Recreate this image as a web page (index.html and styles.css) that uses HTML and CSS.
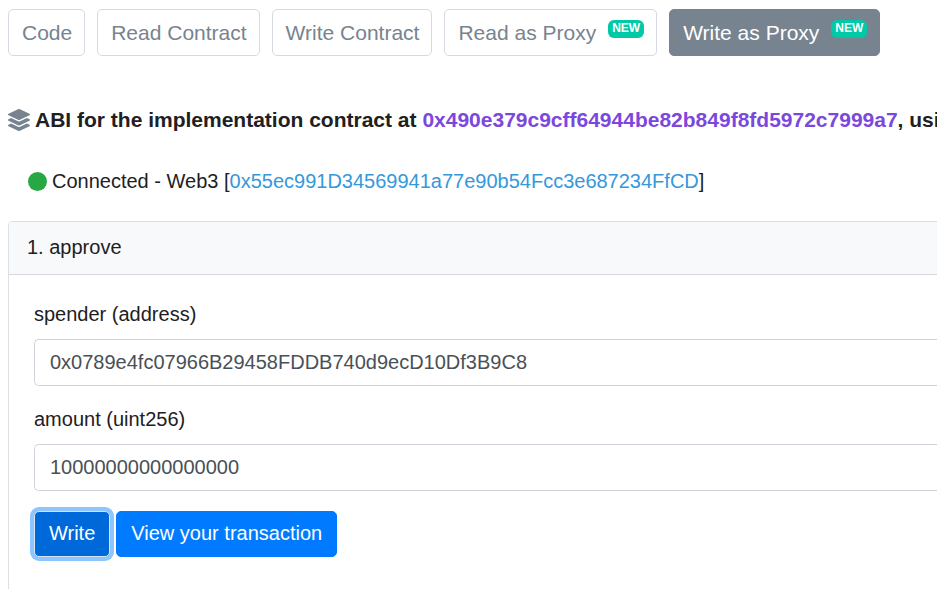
FILE: index.html
```html
<!DOCTYPE html>
<html lang="en">
<head>
<meta charset="utf-8">
<title>Write as Proxy</title>
<link rel="stylesheet" href="styles.css">
</head>
<body>
<nav class="tabs" aria-label="Contract views">
  <button class="tab" type="button">Code</button>
  <button class="tab" type="button">Read Contract</button>
  <button class="tab" type="button">Write Contract</button>
  <button class="tab" type="button">Read as Proxy <span class="badge">NEW</span></button>
  <button class="tab tab-active" type="button">Write as Proxy <span class="badge">NEW</span></button>
</nav>
<main>
  <p class="abi">
    <svg class="layers" viewBox="0 0 512 512" aria-hidden="true"><path d="M12.41 148.02l232.94 105.67c6.8 3.09 14.49 3.09 21.29 0l232.94-105.67c16.55-7.51 16.55-32.52 0-40.03L266.65 2.31a25.607 25.607 0 0 0-21.29 0L12.41 107.98c-16.55 7.51-16.55 32.53 0 40.04zm487.18 88.28l-58.09-26.33-161.64 73.27c-7.56 3.43-15.59 5.17-23.86 5.17s-16.29-1.74-23.86-5.17L70.51 209.97l-58.1 26.33c-16.55 7.5-16.55 32.5 0 40l232.94 105.59c6.8 3.08 14.49 3.08 21.29 0L499.59 276.3c16.55-7.5 16.55-32.5 0-40zm0 127.8l-57.87-26.23-161.86 73.37c-7.56 3.43-15.59 5.17-23.86 5.17s-16.29-1.74-23.86-5.17L70.29 337.87 12.41 364.1c-16.55 7.5-16.55 32.5 0 40l232.94 105.59c6.8 3.08 14.49 3.08 21.29 0L499.59 404.1c16.55-7.5 16.55-32.5 0-40z"/></svg>
    <span>ABI for the implementation contract at <a class="contract" href="#">0x490e379c9cff64944be82b849f8fd5972c7999a7</a>, using</span>
  </p>
  <p class="status"><span class="dot"></span><span>Connected - Web3 [<a href="#">0x55ec991D34569941a77e90b54Fcc3e687234FfCD</a>]</span></p>
  <section class="card">
    <h2 class="card-head">1. approve</h2>
    <form class="card-body">
      <label for="spender">spender (address)</label>
      <input id="spender" type="text" value="0x0789e4fc07966B29458FDDB740d9ecD10Df3B9C8">
      <label for="amount">amount (uint256)</label>
      <input id="amount" type="text" value="10000000000000000">
      <div class="actions">
        <button class="btn btn-focus" type="button">Write</button>
        <button class="btn" type="button">View your transaction</button>
      </div>
    </form>
  </section>
</main>
</body>
</html>
```
FILE: styles.css
```css
* { box-sizing: border-box; }
body {
  margin: 0;
  padding: 9px 0 0 8px;
  overflow: hidden;
  background: #fff;
  color: #1e2022;
  font: 20px/30px "Liberation Sans", Arial, sans-serif;
}
button, input { font: inherit; }
a { color: #3498db; text-decoration: none; }
.tabs { display: flex; gap: 12px; }
.tab {
  display: flex;
  align-items: center;
  gap: 12px;
  height: 47px;
  padding: 0 12px 0 13px;
  border: 1px solid #d5dae2;
  border-radius: 5px;
  background: #fff;
  color: #77838f;
  font-size: 21px;
  white-space: nowrap;
}
.tab-active { background: #77838f; border-color: #77838f; color: #fff; }
.badge {
  height: 18px;
  margin-bottom: 8px;
  padding: 0 4px;
  border-radius: 6px;
  background: #00c9a7;
  color: #fff;
  font-size: 12px;
  font-weight: bold;
  line-height: 16px;
}
.abi {
  display: flex;
  align-items: center;
  gap: 5px;
  margin: 49px 0 0;
  font-size: 21px;
  font-weight: bold;
  white-space: nowrap;
}
.layers { flex: none; width: 22px; height: 22px; fill: #77838f; }
.contract { color: #7c47dc; }
.status { display: flex; align-items: center; gap: 5px; margin: 31px 0 0 20px; }
.dot { width: 19px; height: 19px; border-radius: 50%; background: #28a745; }
.card {
  margin-top: 25px;
  border: 1px solid #dcdfe3;
  border-right: 0;
  border-bottom: 0;
  border-radius: 5px 0 0;
}
.card-head {
  margin: 0;
  padding: 10px 18px 12px;
  border-bottom: 1px solid #d5d8dc;
  border-radius: 4px 0 0;
  background: #f8f9fb;
  font-size: 20px;
  font-weight: normal;
}
.card-body { padding: 24px 0 48px 25px; }
label { display: block; margin-bottom: 10px; }
input {
  display: block;
  width: 100%;
  height: 47px;
  margin-bottom: 18px;
  padding: 0 15px;
  border: 1px solid #ced4da;
  border-right: 0;
  border-radius: 5px 0 0 5px;
  background: #fff;
  color: #495057;
}
.actions { display: flex; gap: 6px; padding-top: 2px; }
.btn {
  height: 46px;
  padding: 0 14px 2px;
  border: 1px solid #007bff;
  border-radius: 5px;
  background: #007bff;
  color: #fff;
}
.btn-focus { background: #0069d9; border-color: #d5e3f3; box-shadow: 0 0 0 4px #8ec5ff; }
```
